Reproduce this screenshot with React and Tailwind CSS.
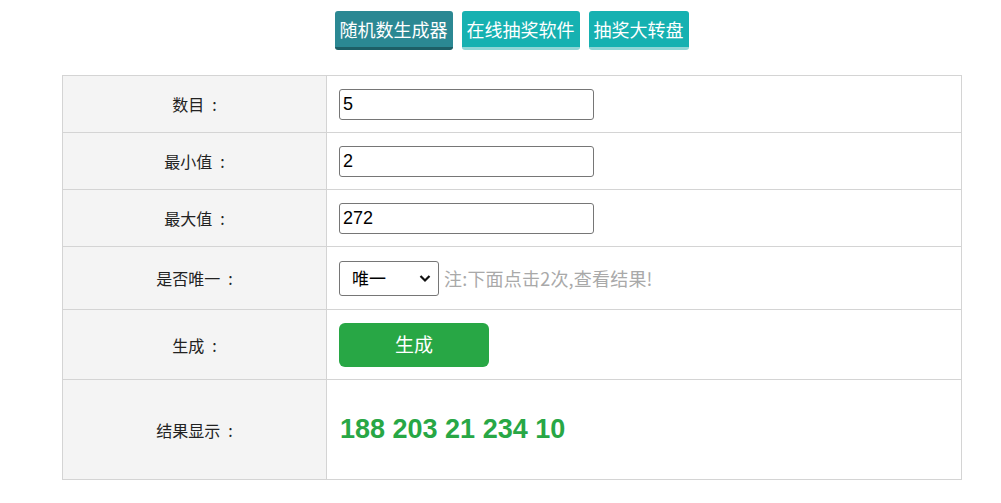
import { useState } from 'react';

const rows = [
  { label: '数目', value: '5' },
  { label: '最小值', value: '2' },
  { label: '最大值', value: '272' },
];

const cjk = { fontFamily: '"Microsoft YaHei", "Noto Sans CJK SC", "Liberation Sans", sans-serif' };
const latin = { fontFamily: '"Liberation Sans", Arial, sans-serif' };

const Label = ({ text }) => (
  <td className="bg-[#f4f4f4] border border-[#d4d4d4] text-center">
    {text}
    <span className="ml-[8px]">:</span>
  </td>
);

export default function App() {
  const [unique, setUnique] = useState('1');

  return (
    <div className="bg-white min-h-[503px] text-[#222]" style={cjk}>
      <div className="flex justify-center gap-[9px] pt-[11px] pl-[22px]">
        <button className="h-[39px] px-[5px] rounded-[3px] bg-[#2b8893] border-b-[3px] border-[#1d5e66] text-white text-[18px] leading-none">
          随机数生成器
        </button>
        <button className="h-[39px] px-[5px] rounded-[3px] bg-[#16b1b1] border-b-[3px] border-[#8fd6d6] text-white text-[18px] leading-none">
          在线抽奖软件
        </button>
        <button className="h-[39px] px-[5px] rounded-[3px] bg-[#16b1b1] border-b-[3px] border-[#8fd6d6] text-white text-[18px] leading-none">
          抽奖大转盘
        </button>
      </div>

      <table className="mt-[25px] ml-[62px] w-[900px] border-collapse text-[16px]">
        <tbody>
          {rows.map((r) => (
            <tr key={r.label} className="h-[57px]">
              <td className="w-[264px] bg-[#f4f4f4] border border-[#d4d4d4] text-center">
                {r.label}
                <span className="ml-[8px]">:</span>
              </td>
              <td className="border border-[#d4d4d4] pl-[12px]">
                <input
                  defaultValue={r.value}
                  className="w-[255px] h-[31px] border border-[#767676] rounded-[3px] px-[3px] text-[18px] text-black"
                  style={latin}
                />
              </td>
            </tr>
          ))}
          <tr className="h-[63px]">
            <Label text="是否唯一" />
            <td className="border border-[#d4d4d4] pl-[12px]">
              <div className="flex items-center gap-[5px]">
                <div className="relative w-[100px] h-[35px]">
                  <select
                    value={unique}
                    onChange={(e) => setUnique(e.target.value)}
                    className="appearance-none w-full h-full border border-[#767676] rounded-[3px] pl-[12px] text-[17px] text-black bg-white"
                  >
                    <option value="1">唯一</option>
                    <option value="0">不唯一</option>
                  </select>
                  <svg className="absolute right-[8px] top-[13px] pointer-events-none" width="12" height="9" viewBox="0 0 12 9">
                    <path d="M1.5 2l4.5 4.5L10.5 2" fill="none" stroke="#111" strokeWidth="2.2" />
                  </svg>
                </div>
                <span className="text-[#a9a9a9] text-[18px] tracking-[0.2px]">注:下面点击2次,查看结果!</span>
              </div>
            </td>
          </tr>
          <tr className="h-[70px]">
            <Label text="生成" />
            <td className="border border-[#d4d4d4] pl-[12px]">
              <button className="w-[150px] h-[44px] rounded-[6px] bg-[#28a745] text-white text-[19px]">生成</button>
            </td>
          </tr>
          <tr className="h-[100px]">
            <Label text="结果显示" />
            <td className="border border-[#d4d4d4] pl-[13px]">
              <span className="text-[#28a745] text-[27px] font-bold" style={latin}>
                188 203 21 234 10
              </span>
            </td>
          </tr>
        </tbody>
      </table>
    </div>
  );
}
